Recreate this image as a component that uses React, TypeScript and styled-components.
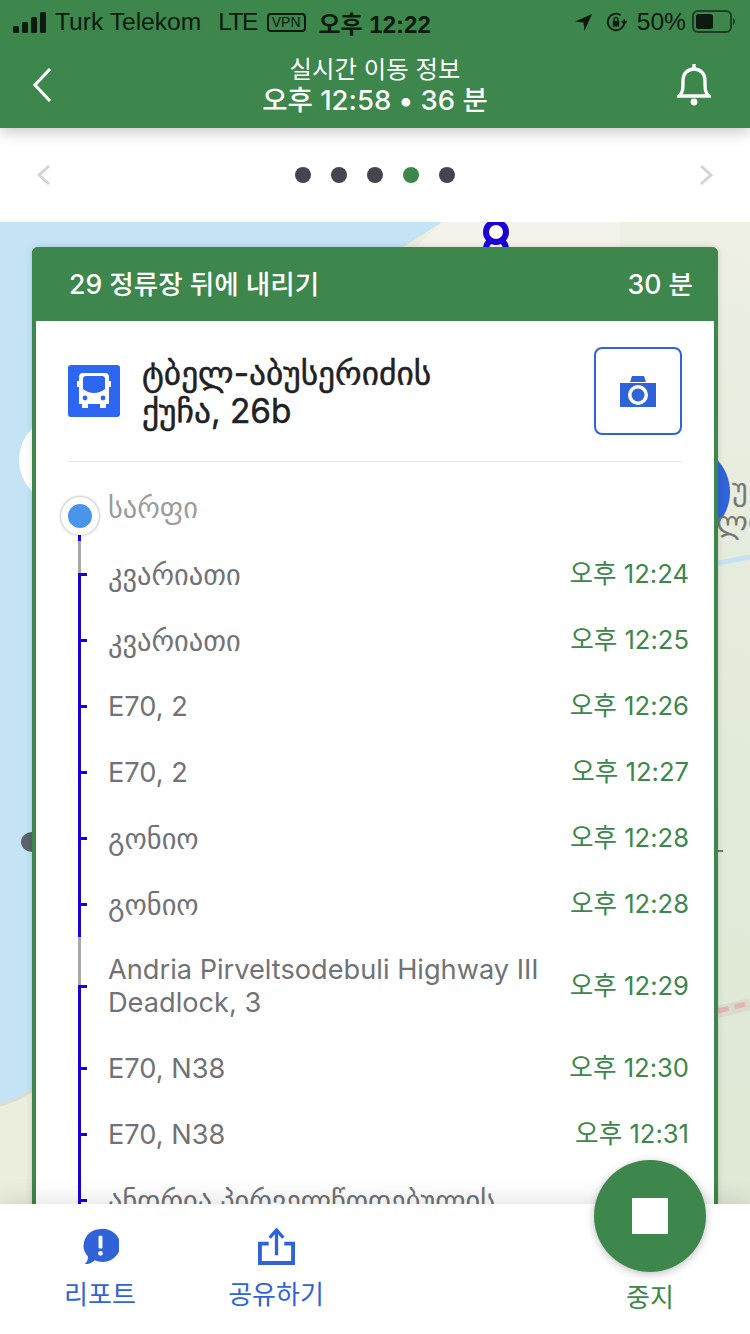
import React from "react"
import styled, { createGlobalStyle } from "styled-components"

const GREEN = "#3d864c"
const BLUE = "#3163d8"
const ROUTE_BLUE = "#1a00d6"
const ROUTE_GRAY = "#a9a9a9"
const LATIN = `Inter, "DejaVu Sans", "Noto Sans CJK KR", sans-serif`

const GlobalStyle = createGlobalStyle`
html, body {
    margin: 0;
    padding: 0;
    background: #fff;
    font-family: ${LATIN};
}
`

const Page = styled.div`
width: 750px;
height: 1334px;
display: flex;
flex-direction: column;
overflow: hidden;
position: relative;
background: #fff;
`

const Header = styled.header`
height: 128px;
flex: none;
background: ${GREEN};
display: flex;
flex-direction: column;
position: relative;
z-index: 3;
box-shadow: 0 4px 14px rgba(0, 0, 0, 0.22);
`

const StatusBar = styled.div`
height: 40px;
padding: 2px 14px 0 13px;
display: flex;
align-items: center;
justify-content: space-between;
color: #0d1a10;
font-family: "Liberation Sans", "Noto Sans CJK KR", sans-serif;
font-size: 24.6px;
`

const StatusGroup = styled.div`
display: flex;
align-items: center;
`

const Carrier = styled.span`
margin-left: 8px;
`

const Network = styled.span`
margin-left: 17px;
letter-spacing: -1.6px;
`

const VpnBadge = styled.span`
margin-left: 10px;
border: 2px solid #0d1a10;
border-radius: 4px;
font-size: 14px;
line-height: 15px;
padding: 0 3px;
`

const Clock = styled.span`
margin-left: 13px;
font-weight: 700;
font-size: 24px;
`

const Percent = styled.span`
margin-left: 10px;
`

const RotationIcon = styled.svg`
margin-left: 12px;
`

const BatteryIcon = styled.svg`
display: block;
margin-left: 6px;
`

const TitleBar = styled.div`
flex: 1;
padding: 0 39px 0 32px;
display: grid;
grid-template-columns: 1fr auto 1fr;
align-items: center;
color: #fff;
`

const BellIcon = styled.svg`
justify-self: end;
`

const TitleText = styled.div`
display: flex;
flex-direction: column;
align-items: center;
margin: -1px 0 0 7px;
`

const TitleTop = styled.div`
font-size: 24.4px;
line-height: 30px;
`

const TitleBottom = styled.div`
font-size: 27.5px;
line-height: 32px;
font-weight: 500;
`

const Pager = styled.div`
height: 94px;
flex: none;
padding: 0 35px;
display: flex;
align-items: center;
justify-content: space-between;
`

const Dots = styled.div`
display: flex;
gap: 20px;
`

const Dot = styled.span<{ $active?: boolean }>`
width: 16px;
height: 16px;
border-radius: 50%;
background: ${(p) => (p.$active ? GREEN : "#44454e")};
`

const MapArea = styled.main`
flex: 1;
min-height: 0;
position: relative;
overflow: hidden;
padding: 25px 32px 0 32px;
`

const MapDrawing = styled.svg`
position: absolute;
left: 0;
top: 0;
`

const Card = styled.section`
position: relative;
height: 1000px;
border-radius: 6px 6px 0 0;
border: solid ${GREEN};
border-width: 0 4px;
background: #fff;
box-shadow: 0 0 6px rgba(0, 0, 0, 0.15);
`

const CardHead = styled.div`
height: 74px;
box-sizing: border-box;
margin: 0 -4px;
padding: 0 25px 3px 37px;
border-radius: 6px 6px 0 0;
background: ${GREEN};
color: #fff;
display: flex;
align-items: center;
justify-content: space-between;
font-size: 26.6px;
font-weight: 500;
`

const RouteInfo = styled.div`
height: 141px;
margin: 0 32px;
box-sizing: border-box;
border-bottom: 1px solid #e8e8e8;
display: flex;
align-items: flex-start;
`

const BusBadge = styled.span`
width: 52px;
height: 52px;
margin-top: 44px;
flex: none;
border-radius: 3px;
background: #2d66f0;
display: flex;
align-items: center;
justify-content: center;
`

const RouteName = styled.div`
margin: 33px 0 0 22px;
flex: 1;
color: #202124;
font-size: 33.4px;
line-height: 38px;
-webkit-text-stroke: 0.5px #202124;
`

const CameraButton = styled.button`
width: 88px;
height: 88px;
margin-top: 26px;
padding: 0;
flex: none;
border: 2px solid ${BLUE};
border-radius: 8px;
background: #fff;
display: flex;
align-items: center;
justify-content: center;
`

const StopList = styled.ol`
list-style: none;
margin: 0;
padding: 13px 25px 0 0;
`

const Stop = styled.li<{ $tall?: boolean }>`
position: relative;
min-height: ${(p) => (p.$tall ? 98 : 66)}px;
padding-left: 72px;
display: flex;
align-items: center;
justify-content: space-between;
color: #707277;
font-size: 27.2px;
line-height: 33px;
`

const StopName = styled.span<{ $georgian?: boolean; $first?: boolean }>`
width: 440px;
font-size: ${(p) => (p.$georgian ? 28.4 : 27.2)}px;
color: ${(p) => (p.$first ? "#9a9ca0" : "#707277")};
margin-top: ${(p) => (p.$first ? -2 : 0)}px;
`

const StopTime = styled.span`
color: ${GREEN};
font-size: 25.6px;
white-space: nowrap;
margin-top: -1px;
`

const Rail = styled.span<{ $color: string; $top: number; $height: number }>`
position: absolute;
left: 42px;
top: ${(p) => p.$top}px;
width: 3px;
height: ${(p) => p.$height}px;
background: ${(p) => p.$color};
`

const Tick = styled.span<{ $top: number }>`
position: absolute;
left: 42px;
top: ${(p) => p.$top}px;
width: 9px;
height: 3px;
background: ${ROUTE_BLUE};
`

const StartMarker = styled.span`
position: absolute;
left: 25px;
top: 22px;
width: 24px;
height: 24px;
border: 7px solid #fff;
border-radius: 50%;
background: #4a94ea;
box-shadow: 0 0 3px rgba(0, 0, 0, 0.45);
z-index: 1;
`

const BottomBar = styled.footer`
height: 130px;
flex: none;
position: relative;
z-index: 2;
background: #fff;
box-shadow: 0 -6px 20px rgba(0, 0, 0, 0.1);
display: flex;
padding: 0 0 0 50px;
`

const BarAction = styled.button<{ $width: number; $gap?: number }>`
width: ${(p) => p.$width}px;
margin-left: ${(p) => p.$gap || 0}px;
padding: 24px 0 0 0;
border: 0;
background: none;
display: flex;
flex-direction: column;
align-items: center;
color: ${BLUE};
font-family: ${LATIN};
font-size: 26px;
line-height: 34px;
`

const BarLabel = styled.span`
margin-top: 13px;
`

const StopAction = styled(BarAction)`
margin-left: auto;
margin-right: 70px;
padding-top: 77px;
color: ${GREEN};
`

const Fab = styled.span`
position: absolute;
right: 44px;
top: -44px;
width: 112px;
height: 112px;
border-radius: 50%;
background: ${GREEN};
box-shadow: 0 2px 8px rgba(0, 0, 0, 0.25);
display: flex;
align-items: center;
justify-content: center;
`

const FabSquare = styled.span`
width: 36px;
height: 36px;
border-radius: 1px;
background: #fff;
`

const stops = [
    { name: "კვარიათი", time: "오후 12:24", georgian: true, grayTop: 32 },
    { name: "კვარიათი", time: "오후 12:25", georgian: true },
    { name: "E70, 2", time: "오후 12:26" },
    { name: "E70, 2", time: "오후 12:27" },
    { name: "გონიო", time: "오후 12:28", georgian: true },
    { name: "გონიო", time: "오후 12:28", georgian: true },
    { name: "Andria Pirveltsodebuli Highway III Deadlock, 3", time: "오후 12:29", tall: true, grayTop: 48 },
    { name: "E70, N38", time: "오후 12:30" },
    { name: "E70, N38", time: "오후 12:31" },
    { name: "ანდრია პირველწოდებულის", time: "", georgian: true },
]

const MapBackdrop = () => (
    <MapDrawing width={750} height={982} viewBox="0 0 750 982">
        <defs>
            <linearGradient id="land" x1="0" y1="0" x2="0" y2="1">
                <stop offset="0" stopColor="#edf0e3" />
                <stop offset="0.55" stopColor="#e2ead9" />
                <stop offset="1" stopColor="#e0e9d6" />
            </linearGradient>
        </defs>
        <rect width={750} height={982} fill="#c4e4f5" />
        <path d="M442 0 L380 40 L380 700 L32 868 C24 874 14 878 0 882 L0 982 L380 982 Z" fill="#eceedd" />
        <path d="M442 0 L620 0 L620 60 L380 60 Z" fill="#f3f3ec" />
        <rect x={620} width={130} height={982} fill="url(#land)" />
        <path d="M32 868 C24 874 14 879 0 883" fill="none" stroke="#dcdcd4" strokeWidth={3} />
        <path d="M718 341 L750 335" stroke="#c4e2f0" strokeWidth={5} />
        <path d="M718 790 L750 782" stroke="#d8dccc" strokeWidth={12} />
        <path d="M718 789 L750 781" stroke="#e4b4b2" strokeWidth={5} strokeDasharray="11 6" />
        <rect x={717} y={628} width={6} height={2} fill="#70756c" />
        <circle cx={63} cy={238} r={44} fill="#fff" />
        <ellipse cx={32} cy={620} rx={11} ry={10} fill="#5a6469" />
        <circle cx={496} cy={27} r={10} fill="#fff" stroke={ROUTE_BLUE} strokeWidth={6} />
        <circle cx={496} cy={10} r={10} fill="#fff" stroke={ROUTE_BLUE} strokeWidth={6} />
        <circle cx={683} cy={270} r={47} fill={BLUE} />
        <text x={732} y={278} fontSize={30} fill="#777" fontFamily="DejaVu Sans">უ</text>
        <text x={716} y={311} fontSize={30} fill="#777" fontFamily="DejaVu Sans">ლო</text>
    </MapDrawing>
)

const App = () => {
    return (
        <Page>
            <GlobalStyle />
            <Header>
                <StatusBar>
                    <StatusGroup>
                        <svg width={34} height={21} viewBox="0 0 34 21" fill="#0d1a10">
                            <rect x={0} y={14} width={6} height={7} rx={1.5} />
                            <rect x={9} y={10} width={6} height={11} rx={1.5} />
                            <rect x={18} y={5} width={6} height={16} rx={1.5} />
                            <rect x={27} y={0} width={6} height={21} rx={1.5} />
                        </svg>
                        <Carrier>Turk Telekom</Carrier>
                        <Network>LTE</Network>
                        <VpnBadge>VPN</VpnBadge>
                        <Clock>오후 12:22</Clock>
                    </StatusGroup>
                    <StatusGroup>
                        <svg width={19} height={19} viewBox="0 0 20 20" fill="#0d1a10">
                            <path d="M19 1 L1 9 L10 10 L11 19 Z" />
                        </svg>
                        <RotationIcon width={22} height={24} viewBox="0 0 24 24" fill="none" stroke="#0d1a10" strokeWidth={2}>
                            <path d="M21 12 A9 9 0 1 1 17 4.5" />
                            <path d="M21 9 L21 13 M18.5 11 L21 14 L23.5 11" strokeWidth={1.6} />
                            <rect x={8.5} y={11} width={7} height={6} fill="#0d1a10" stroke="none" />
                            <path d="M10 11 V9 a2 2 0 0 1 4 0 V11" strokeWidth={1.5} />
                        </RotationIcon>
                        <Percent>50%</Percent>
                        <BatteryIcon width={44} height={24} viewBox="0 0 44 24">
                            <rect x={1} y={1} width={38} height={21} rx={5} fill="none" stroke="#1f3d26" strokeWidth={2} />
                            <rect x={4} y={4} width={17} height={15} rx={2.5} fill="#0d1a10" />
                            <path d="M41 8 a4 4 0 0 1 0 7 Z" fill="#1f3d26" />
                        </BatteryIcon>
                    </StatusGroup>
                </StatusBar>
                <TitleBar>
                    <svg width={20} height={36} viewBox="0 0 20 36" fill="none" stroke="#fff" strokeWidth={3.2}>
                        <path d="M18 2 L3 18 L18 34" />
                    </svg>
                    <TitleText>
                        <TitleTop>실시간 이동 정보</TitleTop>
                        <TitleBottom>오후 12:58 • 36 분</TitleBottom>
                    </TitleText>
                    <BellIcon width={34} height={44} viewBox="0 0 34 44" fill="none" stroke="#fff" strokeWidth={3.4}>
                        <path d="M2 33 C6 30 6 26 6 18 C6 10 11 6 17 6 C23 6 28 10 28 18 C28 26 28 30 32 33 Z" />
                        <path d="M17 1 V6" />
                        <circle cx={17} cy={39} r={3.4} fill="#fff" stroke="none" />
                    </BellIcon>
                </TitleBar>
            </Header>
            <Pager>
                <svg width={16} height={22} viewBox="0 0 16 22" fill="none" stroke="#d4d4d4" strokeWidth={3}>
                    <path d="M14 2 L4 11 L14 20" />
                </svg>
                <Dots>
                    <Dot />
                    <Dot />
                    <Dot />
                    <Dot $active />
                    <Dot />
                </Dots>
                <svg width={16} height={22} viewBox="0 0 16 22" fill="none" stroke="#d4d4d4" strokeWidth={3}>
                    <path d="M2 2 L12 11 L2 20" />
                </svg>
            </Pager>
            <MapArea>
                <MapBackdrop />
                <Card>
                    <CardHead>
                        <span>29 정류장 뒤에 내리기</span>
                        <span>30 분</span>
                    </CardHead>
                    <RouteInfo>
                        <BusBadge>
                            <svg width={40} height={40} viewBox="0 0 40 40" fill="#fff">
                                <path d="M9 2 H31 Q35 2 35 6 V33 H32 V37 H26 V33 H14 V37 H8 V33 H5 V6 Q5 2 9 2 Z" />
                                <path d="M12 5 H28 Q31 5 31 8 V18 Q26 22 20 22 Q14 22 9 18 V8 Q9 5 12 5 Z" fill="#2d66f0" />
                                <rect x={3} y={10} width={2} height={6} />
                                <rect x={35} y={10} width={2} height={6} />
                                <circle cx={11} cy={27} r={2.4} fill="#2d66f0" />
                                <circle cx={29} cy={27} r={2.4} fill="#2d66f0" />
                            </svg>
                        </BusBadge>
                        <RouteName>
                            ტბელ-აბუსერიძის
                            <br />
                            ქუჩა, 26b
                        </RouteName>
                        <CameraButton aria-label="camera">
                            <svg width={36} height={32} viewBox="0 0 36 32" fill={BLUE}>
                                <path d="M10 7 L12 1 H24 L26 7 Z" />
                                <rect x={0} y={8} width={36} height={24} />
                                <circle cx={18} cy={20} r={10} fill="#fff" />
                                <circle cx={18} cy={20} r={6.5} />
                            </svg>
                        </CameraButton>
                    </RouteInfo>
                    <StopList>
                        <Stop>
                            <StartMarker />
                            <StopName $georgian $first>სარფი</StopName>
                            <Rail $color={ROUTE_BLUE} $top={60} $height={6} />
                        </Stop>
                        {stops.map((s, i) => {
                            const height = s.tall ? 98 : 66
                            const gray = s.grayTop || 0
                            return (
                                <Stop key={i} $tall={s.tall}>
                                    {gray > 0 && <Rail $color={ROUTE_GRAY} $top={0} $height={gray} />}
                                    <Rail $color={ROUTE_BLUE} $top={gray} $height={height - gray} />
                                    <Tick $top={s.tall ? 48 : 32} />
                                    <StopName $georgian={s.georgian}>{s.name}</StopName>
                                    <StopTime>{s.time}</StopTime>
                                </Stop>
                            )
                        })}
                    </StopList>
                </Card>
            </MapArea>
            <BottomBar>
                <BarAction $width={100}>
                    <svg width={37} height={37} viewBox="0 0 38 38">
                        <path d="M19 1 A18 17 0 1 1 13 33 Q9 37 3 37 Q7 33 6 29 A18 17 0 0 1 19 1 Z" fill={BLUE} />
                        <rect x={17} y={8} width={4} height={13} rx={1} fill="#fff" />
                        <circle cx={19} cy={26} r={2.4} fill="#fff" />
                    </svg>
                    <BarLabel>리포트</BarLabel>
                </BarAction>
                <BarAction $width={100} $gap={76}>
                    <svg width={37} height={37} viewBox="0 0 38 38" fill="none" stroke={BLUE} strokeWidth={4}>
                        <path d="M11 16 H2 V36 H36 V16 H27" />
                        <path d="M19 28 V3" strokeWidth={3.4} />
                        <path d="M12 10 L19 2 L26 10" strokeWidth={3.4} />
                    </svg>
                    <BarLabel>공유하기</BarLabel>
                </BarAction>
                <Fab>
                    <FabSquare />
                </Fab>
                <StopAction $width={60}>중지</StopAction>
            </BottomBar>
        </Page>
    )
}

export default App
